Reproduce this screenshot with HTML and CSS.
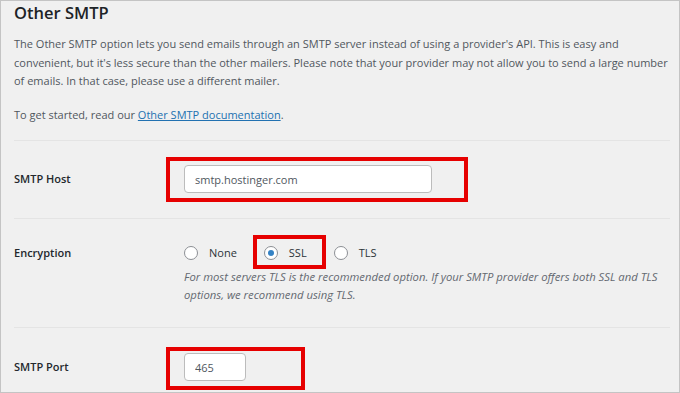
FILE: index.html
```html
<!DOCTYPE html>
<html lang="en">

<head>
    <meta charset="UTF-8">
    <meta name="viewport" content="width=device-width, initial-scale=1.0">
    <title>Other SMTP</title>
    <link rel="stylesheet" href="styles.css">
</head>

<body>
    <div class="panel">
        <h2 class="title">Other SMTP</h2>
        <p class="intro">The Other SMTP option lets you send emails through an SMTP server instead of using a provider's API. This is easy and convenient, but it's less secure than the other mailers. Please note that your provider may not allow you to send a large number of emails. In that case, please use a different mailer.</p>
        <p class="intro intro-last">To get started, read our <a href="#">Other SMTP documentation</a>.</p>

        <div class="row row-host">
            <label class="row-label" for="smtpHost">SMTP Host</label>
            <div class="field">
                <span class="mark mark-host">
                    <input type="text" class="text-input host-input" id="smtpHost" value="smtp.hostinger.com">
                </span>
            </div>
        </div>

        <div class="row row-enc">
            <span class="row-label">Encryption</span>
            <div class="field">
                <div class="options">
                    <label class="option"><input type="radio" name="enc" class="radio"> None</label>
                    <label class="option mark mark-ssl"><input type="radio" name="enc" class="radio" checked> SSL</label>
                    <label class="option"><input type="radio" name="enc" class="radio"> TLS</label>
                </div>
                <p class="desc">For most servers TLS is the recommended option. If your SMTP provider offers both SSL and TLS options, we recommend using TLS.</p>
            </div>
        </div>

        <div class="row row-port">
            <label class="row-label" for="smtpPort">SMTP Port</label>
            <div class="field">
                <span class="mark mark-port">
                    <input type="text" class="text-input port-input" id="smtpPort" value="465">
                </span>
            </div>
        </div>
    </div>
</body>

</html>
```

FILE: styles.css
```css
html,
body {
    margin: 0;
    padding: 0;
}

body {
    font-family: "Open Sans", "Noto Sans", sans-serif;
    background-color: #f0f0f0;
}

.panel {
    box-sizing: border-box;
    width: 680px;
    height: 393px;
    padding: 0 9px 0 13px;
    border: 1px solid #c4c4c4;
    background-color: #f0f0f0;
    overflow: hidden;
}

.title {
    margin: 0;
    font-size: 16.5px;
    font-weight: 600;
    line-height: 24px;
    color: #1d2327;
}

.intro {
    margin: 10px 0 0;
    font-size: 11px;
    line-height: 18.5px;
    color: #50575e;
}

.intro-last {
    margin-top: 15.5px;
    margin-bottom: 15.5px;
}

.intro a {
    color: #2271b1;
    text-decoration: underline;
}

.row {
    display: grid;
    grid-template-columns: 170px 1fr;
    border-top: 1px solid #e4e4e4;
}

.row-label {
    font-size: 11px;
    font-weight: 600;
    line-height: 18px;
    color: #23282d;
}

.row-host {
    padding: 24px 0 25px;
    align-items: center;
}

.row-enc {
    padding: 25px 0 23px;
}

.row-port {
    padding: 25px 0 0;
    align-items: center;
}

.text-input {
    box-sizing: border-box;
    height: 28px;
    padding: 0 10px;
    border: 1px solid #bcbcbc;
    border-radius: 4px;
    background-color: #fff;
    font-family: inherit;
    font-size: 11px;
    color: #50575e;
    vertical-align: top;
}

.host-input {
    width: 248px;
}

.port-input {
    width: 62px;
}

.options {
    display: flex;
    height: 18px;
    align-items: center;
}

.option {
    display: flex;
    align-items: center;
    gap: 11px;
    margin-right: 27px;
    font-size: 11px;
    line-height: 18px;
    color: #2c3338;
}

.radio {
    appearance: none;
    box-sizing: border-box;
    width: 14px;
    height: 14px;
    margin: 0;
    border: 1px solid #8c8f94;
    border-radius: 50%;
    background-color: #fff;
    display: grid;
    place-items: center;
}

.radio:checked::before {
    content: "";
    width: 6px;
    height: 6px;
    border-radius: 50%;
    background-color: #3582c4;
}

.desc {
    margin: 6px 0 0;
    font-size: 11.3px;
    font-style: italic;
    line-height: 18px;
    color: #646970;
}

/* red highlight boxes drawn over the screenshot */
.mark {
    position: relative;
    display: inline-block;
}

.mark::after {
    content: "";
    position: absolute;
    border: 4px solid #e60000;
    pointer-events: none;
}

.mark-host::after {
    top: -8px;
    left: -18px;
    right: -36px;
    bottom: -9px;
}

.option.mark {
    display: flex;
}

.mark-ssl::after {
    top: -9px;
    left: -11px;
    right: -19px;
    bottom: -7px;
}

.mark-port::after {
    top: -6px;
    left: -18px;
    right: -59px;
    bottom: -9px;
}
```
